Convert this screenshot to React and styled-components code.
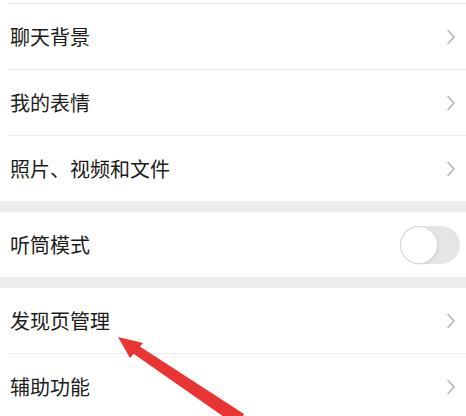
import React from 'react'
import styled, { createGlobalStyle } from 'styled-components'

const GlobalStyle = createGlobalStyle`
  html, body {
    margin: 0;
    padding: 0;
    background: #ffffff;
  }
  body {
    font-family: "Noto Sans CJK SC", "Noto Sans", sans-serif;
    overflow: hidden;
  }
`

const Page = styled.div`
  position: relative;
  width: 466px;
  height: 416px;
  overflow: hidden;
  background: #ffffff;
  padding-top: 3px;
  box-sizing: border-box;
`

const Divider = styled.div`
  height: 1px;
  margin-left: 8px;
  background: #ececec;
`

const GroupGap = styled.div`
  height: ${p => p.$h}px;
  background: #ededed;
`

const Row = styled.div`
  height: 65px;
  display: flex;
  align-items: center;
  justify-content: space-between;
  padding: 0 10px 0 10px;
  box-sizing: border-box;
`

const Label = styled.span`
  font-size: 20px;
  color: #1b1b1b;
  letter-spacing: 0;
`

const Chevron = () => (
  <svg width="10" height="16" viewBox="0 0 10 16" style={{ marginRight: 0 }}>
    <path d="M2 1.5 L8 8 L2 14.5" fill="none" stroke="#b4b4b4" strokeWidth="1.6" strokeLinecap="round" strokeLinejoin="round" />
  </svg>
)

const Track = styled.div`
  width: 60px;
  height: 38px;
  border-radius: 19px;
  background: #e5e5e5;
  display: flex;
  align-items: center;
  margin-right: -4px;
`

const Knob = styled.div`
  width: 36px;
  height: 36px;
  border-radius: 50%;
  background: #ffffff;
  margin-left: 1px;
  box-shadow: 0 0 0 1px #d6d6d6, 1px 1px 3px rgba(0, 0, 0, 0.12);
`

const Arrow = styled.svg`
  position: absolute;
  left: 0;
  top: 0;
  pointer-events: none;
`

function Item({ label, toggle }) {
  return (
    <Row>
      <Label>{label}</Label>
      {toggle ? (
        <Track><Knob /></Track>
      ) : (
        <Chevron />
      )}
    </Row>
  )
}

export default function App() {
  return (
    <>
      <GlobalStyle />
      <Page>
        <Divider />
        <Item label="聊天背景" />
        <Divider />
        <Item label="我的表情" />
        <Divider />
        <Item label="照片、视频和文件" />
        <GroupGap $h={11} />
        <Item label="听筒模式" toggle />
        <GroupGap $h={11} />
        <Item label="发现页管理" />
        <Divider />
        <Item label="辅助功能" />

        <Arrow width="466" height="416" viewBox="0 0 466 416">
          <polygon points="118,337 143,343 130,358" fill="#ea3434" />
          <polygon points="136,344 244,414 237,426 131,352" fill="#ea3434" />
        </Arrow>
      </Page>
    </>
  )
}
